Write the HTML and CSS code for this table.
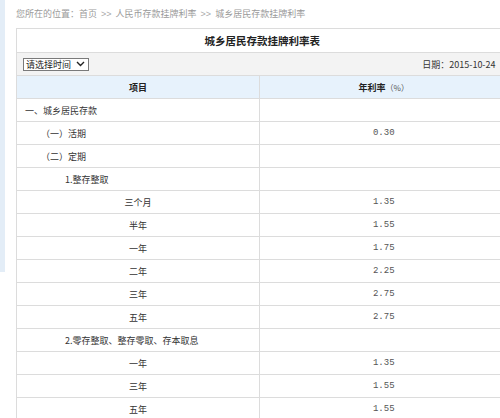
FILE: index.html
```html
<!DOCTYPE html>
<html lang="zh-CN">
<head>
<meta charset="utf-8">
<title>城乡居民存款挂牌利率表</title>
<link rel="stylesheet" href="styles.css">
</head>
<body>
<div class="layout">
  <div class="strip"></div>
  <div class="main">
    <div class="crumb">您所在的位置：首页 <span class="sep">&gt;&gt;</span> 人民币存款挂牌利率 <span class="sep">&gt;&gt;</span> 城乡居民存款挂牌利率</div>
    <table class="rates">
      <colgroup><col class="c1"><col class="c2"></colgroup>
      <tr class="title"><td colspan="2">城乡居民存款挂牌利率表</td></tr>
      <tr class="tools"><td colspan="2">
        <div class="toolbar">
          <span class="select">请选择时间<svg width="9" height="6" viewBox="0 0 9 6"><path d="M1 1 L4.5 4.5 L8 1" fill="none" stroke="#222" stroke-width="1.4"/></svg></span>
          <span class="date">日期：2015-10-24</span>
        </div>
      </td></tr>
      <tr class="head"><th>项目</th><th>年利率<span class="pct">（%）</span></th></tr>
      <tr><td class="l1">一、城乡居民存款</td><td></td></tr>
      <tr><td class="l2">（一）活期</td><td class="num">0.30</td></tr>
      <tr><td class="l2">（二）定期</td><td></td></tr>
      <tr><td class="l3">1.整存整取</td><td></td></tr>
      <tr><td class="ctr">三个月</td><td class="num">1.35</td></tr>
      <tr><td class="ctr">半年</td><td class="num">1.55</td></tr>
      <tr><td class="ctr">一年</td><td class="num">1.75</td></tr>
      <tr><td class="ctr">二年</td><td class="num">2.25</td></tr>
      <tr><td class="ctr">三年</td><td class="num">2.75</td></tr>
      <tr><td class="ctr">五年</td><td class="num">2.75</td></tr>
      <tr><td class="l3">2.零存整取、整存零取、存本取息</td><td></td></tr>
      <tr><td class="ctr">一年</td><td class="num">1.35</td></tr>
      <tr><td class="ctr">三年</td><td class="num">1.55</td></tr>
      <tr><td class="ctr">五年</td><td class="num">1.55</td></tr>
    </table>
  </div>
</div>
</body>
</html>
```
FILE: styles.css
```css
html, body {
  margin: 0;
  padding: 0;
  background: #fff;
  overflow: hidden;
}
body {
  font-family: "Noto Sans CJK SC", "Noto Sans", sans-serif;
  color: #333;
  font-size: 9px;
}
.layout {
  display: flex;
  align-items: flex-start;
  width: 520px;
}
.strip {
  width: 5px;
  height: 272px;
  background: #e3edf7;
  flex: none;
}
.main {
  margin-left: 11px;
  width: 491px;
  flex: none;
}
.crumb {
  height: 28px;
  line-height: 28px;
  color: #9a9a9a;
  font-size: 9px;
  white-space: nowrap;
}
.crumb .sep {
  font-family: "Liberation Sans", sans-serif;
  color: #aaa;
  margin: 0 2px;
}
.rates {
  width: 491px;
  border-collapse: collapse;
  table-layout: fixed;
}
.c1 { width: 243px; }
.c2 { width: 248px; }
.rates td, .rates th {
  height: 22px;
  padding: 0;
  border: 1px solid #dcdcdc;
  border-right: none;
  font-size: 9px;
  font-weight: normal;
  color: #333;
}
.title td {
  height: 23px;
  text-align: center;
  font-size: 10.5px;
  font-weight: bold;
  color: #222;
  background: #fff;
}
.tools td {
  height: 22px;
  background: #f3f3f3;
}
.toolbar {
  display: flex;
  justify-content: space-between;
  align-items: center;
  padding: 0 12px 0 6px;
}
.select {
  display: inline-flex;
  align-items: center;
  gap: 5px;
  height: 11px;
  padding: 0 3px 0 2px;
  border: 1px solid #7a7a7a;
  background: #fff;
  color: #222;
  font-size: 9px;
  line-height: 11px;
}
.date {
  font-size: 9px;
  color: #333;
}
.head th {
  background: #e7f2fc;
  text-align: center;
  font-weight: bold;
  color: #222;
}
.head .pct {
  font-weight: normal;
  font-size: 8px;
  color: #555;
}
.l1 { padding-left: 8px !important; }
.l2 { padding-left: 24px !important; }
.l3 { padding-left: 48px !important; }
.ctr { text-align: center; }
.num {
  text-align: center;
  font-family: "Liberation Mono", monospace;
  font-size: 9px !important;
  color: #555 !important;
}
```
